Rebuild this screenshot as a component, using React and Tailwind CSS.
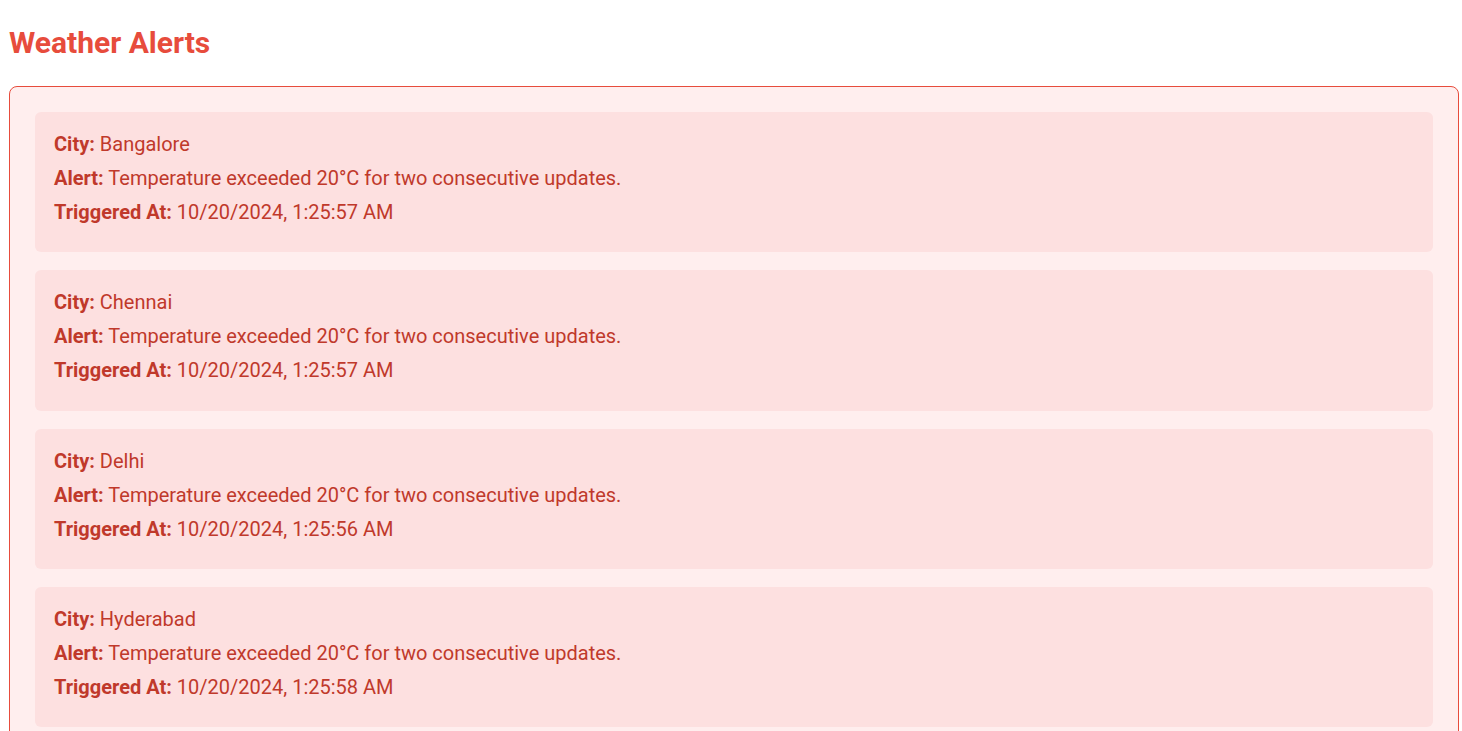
const alerts = [
  { city: 'Bangalore', time: '10/20/2024, 1:25:57 AM' },
  { city: 'Chennai', time: '10/20/2024, 1:25:57 AM' },
  { city: 'Delhi', time: '10/20/2024, 1:25:56 AM' },
  { city: 'Hyderabad', time: '10/20/2024, 1:25:58 AM' },
  { city: 'Kolkata', time: '10/20/2024, 1:25:58 AM' },
]

const AlertItem = ({ city, time }) => (
  <div className="bg-[#fde0e0] rounded-[6px] pt-[21px] pb-[28.3px] px-[19px] flex flex-col gap-[11px] text-[20px] leading-[23px] text-[#c0392b]">
    <p><span className="font-bold">City:</span> {city}</p>
    <p><span className="font-bold">Alert:</span> Temperature exceeded 20°C for two consecutive updates.</p>
    <p><span className="font-bold">Triggered At:</span> {time}</p>
  </div>
)

export default function App() {
  return (
    <div className="bg-white min-h-screen font-['Roboto',sans-serif] pl-[9px] pr-[3px] pt-[25px]">
      <h2 className="text-[30px] leading-[35px] font-bold text-[#e74c3c]">Weather Alerts</h2>
      <div className="mt-[26px] border border-[#e74c3c] rounded-[8px] bg-[#ffeeee] p-[25px] flex flex-col gap-[18px]">
        {alerts.map((a) => (
          <AlertItem key={a.city} city={a.city} time={a.time} />
        ))}
      </div>
    </div>
  )
}
